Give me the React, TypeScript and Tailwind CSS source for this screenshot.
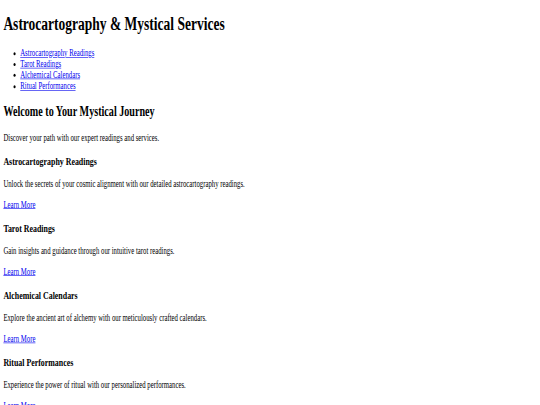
import React from 'react';

const services = [
    { title: 'Astrocartography Readings', text: 'Unlock the secrets of your cosmic alignment with our detailed astrocartography readings.' },
    { title: 'Tarot Readings', text: 'Gain insights and guidance through our intuitive tarot readings.' },
    { title: 'Alchemical Calendars', text: 'Explore the ancient art of alchemy with our meticulously crafted calendars.' },
    { title: 'Ritual Performances', text: 'Experience the power of ritual with our personalized performances.' },
];

export default function App() {
    return (
        <div className="w-[540px] h-[405px] overflow-hidden bg-white">
            {/* page rendered at 1280 wide, then squeezed into the window like the screenshot */}
            <div className="flow-root w-[1280px] origin-top-left scale-x-[0.421875] scale-y-[0.6] px-2 text-black text-[16px] leading-[1.15] font-['Liberation_Serif',serif]">
                <h1 className="text-[32px] font-bold my-[21.44px] leading-[1.15]">Astrocartography &amp; Mystical Services</h1>
                <ul className="list-disc pl-10 my-4">
                    {services.map((s) => (
                        <li key={s.title}>
                            <a href="#" className="text-[#0000ee] underline">{s.title}</a>
                        </li>
                    ))}
                </ul>
                <h2 className="text-[24px] font-bold my-[19.92px] leading-[1.15]">Welcome to Your Mystical Journey</h2>
                <p className="my-4">Discover your path with our expert readings and services.</p>
                {services.map((s) => (
                    <section key={s.title}>
                        <h3 className="text-[18.72px] font-bold my-[18.72px] leading-[1.15]">{s.title}</h3>
                        <p className="my-4">{s.text}</p>
                        <a href="#" className="text-[#0000ee] underline">Learn More</a>
                    </section>
                ))}
            </div>
        </div>
    );
}
